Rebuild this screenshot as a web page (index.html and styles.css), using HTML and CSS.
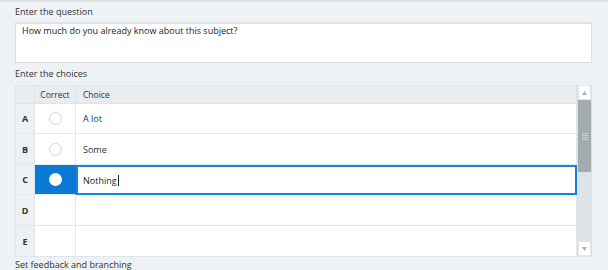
FILE: index.html
```html
<!DOCTYPE html>
<html>
<head>
<meta charset="utf-8">
<link rel="stylesheet" href="styles.css">
</head>
<body>
<div class="page">
  <div class="label first">Enter the question</div>
  <div class="question">How much do you already know about this subject?</div>
  <div class="label">Enter the choices</div>
  <div class="table-wrap">
    <div class="grid">
      <div class="hd corner"></div>
      <div class="hd center">Correct</div>
      <div class="hd">Choice</div>

      <div class="rl">A</div>
      <div class="cell center"><span class="radio"></span></div>
      <div class="cell">A lot</div>

      <div class="rl">B</div>
      <div class="cell center"><span class="radio"></span></div>
      <div class="cell">Some</div>

      <div class="rl">C</div>
      <div class="cell center sel"><span class="radio on"></span></div>
      <div class="cell edit">Nothing<span class="caret"></span></div>

      <div class="rl">D</div>
      <div class="cell center"></div>
      <div class="cell"></div>

      <div class="rl last">E</div>
      <div class="cell center last"></div>
      <div class="cell last"></div>
    </div>
    <div class="vscroll">
      <div class="sbtn up"><svg width="7" height="6" viewBox="0 0 7 6"><path d="M3.5 1 L6 5 L1 5 Z" fill="#a9b0b5"/></svg></div>
      <div class="thumb"><span class="grip"></span></div>
      <div class="track"></div>
      <div class="sbtn down"><svg width="7" height="6" viewBox="0 0 7 6"><path d="M1 1 L6 1 L3.5 5 Z" fill="#a9b0b5"/></svg></div>
    </div>
  </div>
  <div class="label after">Set feedback and branching</div>
</div>
</body>
</html>
```
FILE: styles.css
```css
html, body {
  margin: 0;
  padding: 0;
  height: 100%;
  overflow: hidden;
}
body {
  background: #eff2f5;
  border-top: 2px solid #dde2e6;
  box-sizing: border-box;
  font-family: "Open Sans", "Noto Sans", sans-serif;
  font-size: 9px;
  color: #2e3439;
}
.page {
  padding: 0 16px 0 15px;
}
.label {
  height: 21px;
  line-height: 20px;
  color: #2e3439;
}
.label.first {
  height: 20px;
  line-height: 20px;
}
.label.after {
  height: 14px;
  line-height: 16px;
}
.question {
  height: 38px;
  background: #fff;
  border: 1px solid #d9e0e5;
  border-top: 2px solid #dde3e8;
  padding: 0 6px;
  line-height: 14px;
  color: #1e2226;
  margin-bottom: 1px;
}
.table-wrap {
  display: flex;
  height: 171px;
  border: 1px solid #dfe4e8;
  border-right: none;
  border-top: none;
}
.grid {
  flex: 1;
  display: grid;
  grid-template-columns: 19px 41px 1fr;
  grid-template-rows: 19px 30px 31px 30px 31px 30px;
}
.hd {
  background: #e9edf0;
  border-bottom: 1px solid #dfe4e8;
  border-right: 1px solid #dfe4e8;
  border-top: 1px solid #e4e8eb;
  padding: 0 7px;
  line-height: 17px;
  color: #2e3439;
  font-size: 8.5px;
}
.hd.center { padding: 0; text-align: center; }
.hd:last-child { border-right: none; }
.rl {
  background: #eef1f4;
  border-right: 1px solid #dfe4e8;
  border-bottom: 1px solid #e6e9ec;
  display: flex;
  align-items: center;
  justify-content: center;
  font-weight: 700;
  font-size: 9px;
  color: #2e3439;
}
.cell {
  background: #fff;
  border-right: 1px solid #e3e7ea;
  border-bottom: 1px solid #e6e9ec;
  display: flex;
  align-items: center;
  padding: 0 7px;
  color: #2e3439;
}
.cell.center { justify-content: center; padding: 0; }
.last { border-bottom: none; }
.radio {
  width: 13px;
  height: 13px;
  border: 1px solid #cfd6db;
  border-radius: 50%;
  background: #fff;
  box-sizing: border-box;
}
.radio.on { border: none; }
.cell.sel {
  background: #0a79d4;
  border-right-color: #0a79d4;
}
.cell.edit {
  border: 2px solid #1682dc;
  padding-left: 5px;
  color: #1e2226;
}
.caret {
  display: inline-block;
  width: 1px;
  height: 11px;
  background: #222;
  margin-left: 1px;
}
.vscroll {
  width: 15px;
  display: flex;
  flex-direction: column;
  background: #dfe3e7;
  border-left: 1px solid #dbe0e4;
  border-right: 1px solid #dbe0e4;
  box-sizing: border-box;
}
.sbtn {
  height: 15px;
  background: #fff;
  display: flex;
  align-items: center;
  justify-content: center;
  border: 1px solid #e3e7ea;
  box-sizing: border-box;
}
.thumb {
  height: 72px;
  background: #a3acb1;
  display: flex;
  align-items: center;
  justify-content: center;
}
.grip {
  width: 6px;
  height: 7px;
  background: repeating-linear-gradient(#c9d0d4 0 1px, transparent 1px 2px);
}
.track { flex: 1; }
```
